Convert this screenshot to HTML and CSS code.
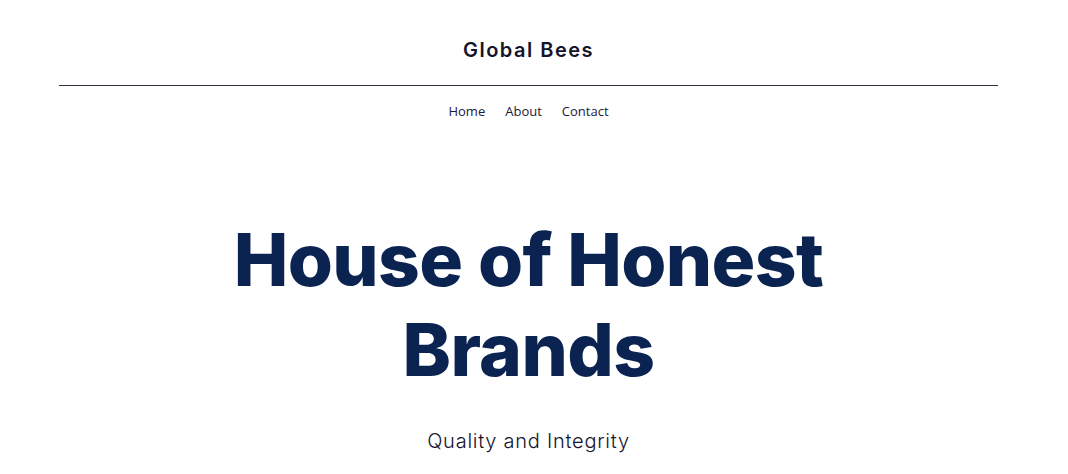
FILE: index.html
```html
<!DOCTYPE html>
<html lang="en">
<head>
<meta charset="utf-8">
<title>Global Bees</title>
<link rel="stylesheet" href="styles.css">
</head>
<body>
<div class="page">
  <header class="site-header">
    <div class="brand">Global Bees</div>
    <hr class="rule">
    <nav class="nav">
      <a href="#">Home</a>
      <a href="#">About</a>
      <a href="#">Contact</a>
    </nav>
  </header>
  <main class="hero">
    <h1 class="hero-title">House of Honest<br>Brands</h1>
    <p class="hero-sub">Quality and Integrity</p>
  </main>
</div>
</body>
</html>
```

FILE: styles.css
```css
html, body {
  margin: 0;
  padding: 0;
  background: #ffffff;
}
.page {
  width: 1057px;
  font-family: "Inter", "Liberation Sans", sans-serif;
  color: #14142b;
}
.site-header {
  display: flex;
  flex-direction: column;
  align-items: center;
  padding-top: 36px;
}
.brand {
  font-family: "Inter", sans-serif;
  font-weight: 600;
  font-size: 20px;
  line-height: 28px;
  letter-spacing: 1.5px;
  color: #14142b;
}
.rule {
  align-self: stretch;
  margin: 21px 59px 0 59px;
  border: 0;
  border-top: 1px solid #333340;
  height: 0;
}
.nav {
  display: flex;
  gap: 20px;
  margin-top: 16px;
}
.nav a {
  font-family: "Open Sans", sans-serif;
  font-size: 13px;
  line-height: 18px;
  color: #1a1a3a;
  text-decoration: none;
}
.hero {
  display: flex;
  flex-direction: column;
  align-items: center;
  padding-top: 95px;
}
.hero-title {
  margin: 0;
  font-family: "Inter", sans-serif;
  font-weight: 800;
  font-size: 73px;
  line-height: 90px;
  letter-spacing: -0.6px;
  text-align: center;
  color: #0a2351;
}
.hero-sub {
  margin: 32px 0 0 0;
  font-family: "Inter", sans-serif;
  font-weight: 300;
  font-size: 20px;
  line-height: 28px;
  letter-spacing: 0.75px;
  color: #14142b;
}
```
